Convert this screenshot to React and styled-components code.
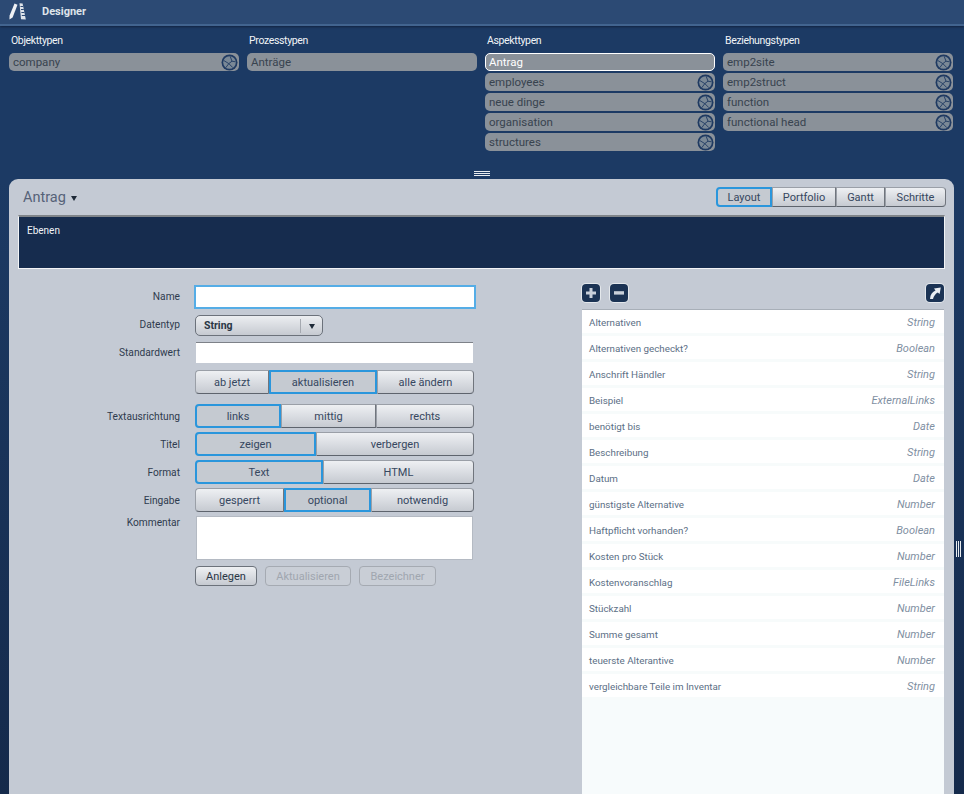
import React from "react";
import styled, { createGlobalStyle } from "styled-components";

const typeColumns = [
    { title: "Objekttypen", items: ["company"] },
    { title: "Prozesstypen", items: ["Anträge"], locked: true },
    {
        title: "Aspekttypen",
        items: ["Antrag", "employees", "neue dinge", "organisation", "structures"],
        selected: "Antrag",
    },
    { title: "Beziehungstypen", items: ["emp2site", "emp2struct", "function", "functional head"] },
];

const tabs = [
    { label: "Layout", width: 56, active: true },
    { label: "Portfolio", width: 64 },
    { label: "Gantt", width: 49 },
    { label: "Schritte", width: 61 },
];

const attributes = [
    ["Alternativen", "String"],
    ["Alternativen gecheckt?", "Boolean"],
    ["Anschrift Händler", "String"],
    ["Beispiel", "ExternalLinks"],
    ["benötigt bis", "Date"],
    ["Beschreibung", "String"],
    ["Datum", "Date"],
    ["günstigste Alternative", "Number"],
    ["Haftpflicht vorhanden?", "Boolean"],
    ["Kosten pro Stück", "Number"],
    ["Kostenvoranschlag", "FileLinks"],
    ["Stückzahl", "Number"],
    ["Summe gesamt", "Number"],
    ["teuerste Alterantive", "Number"],
    ["vergleichbare Teile im Inventar", "String"],
];

const Segments = ({ items, height = 24 }) => (
    <SegmentRow>
        {items.map((item) => (
            <Segment key={item.label} $width={item.width} $height={height} $active={item.active}>
                {item.label}
            </Segment>
        ))}
    </SegmentRow>
);

const WheelIcon = () => (
    <WheelSvg viewBox="0 0 17 17">
        <circle cx="8.5" cy="8.5" r="8" fill="#1f3a62" />
        <circle cx="8.5" cy="8.5" r="6.3" fill="#7a8896" />
        <path d="M2.6 6.4L7.8 9.6L4.8 13.6M7.8 9.6L11 7.2L9.2 2.4M11 7.2L14.4 7.8M7.8 9.6L11.8 13.6" stroke="#1f3a62" strokeWidth="0.9" fill="none" />
    </WheelSvg>
);

const Logo = () => (
    <svg width="17" height="17" viewBox="0 0 17 17">
        <path d="M5.5 0.5L8.5 1.8L3.6 14.6L0.4 16.6L0.6 12.6Z" fill="#eef1f5" />
        <path d="M10.5 0.3L13.6 0.6L16.8 16.4L12 16.2Z" fill="#dfe4ea" />
        <path d="M11.5 3.5H14.2M12 6.5H14.8M12.4 9.5H15.4M12.8 12.5H16" stroke="#2c4a74" strokeWidth="1" />
    </svg>
);

const App = () => (
    <Page>
        <GlobalStyle />
        <TopBar>
            <Logo />
            <AppTitle>Designer</AppTitle>
        </TopBar>
        <TypeGrid>
            {typeColumns.map((column) => (
                <TypeColumn key={column.title}>
                    <ColumnTitle>{column.title}</ColumnTitle>
                    <ChipList>
                        {column.items.map((item) => (
                            <Chip key={item} $selected={item === column.selected}>
                                {item}
                                {!column.locked && item !== column.selected && <WheelIcon />}
                            </Chip>
                        ))}
                    </ChipList>
                </TypeColumn>
            ))}
        </TypeGrid>
        <Splitter>
            <Grip />
        </Splitter>
        <Panel>
            <PanelHead>
                <PanelTitle>
                    Antrag <Caret />
                </PanelTitle>
                <Segments items={tabs} height={20} />
            </PanelHead>
            <LayerBox>Ebenen</LayerBox>
            <Columns>
                <Form>
                    <Label $lift={4}>Name</Label>
                    <FocusInput />
                    <Label $lift={4}>Datentyp</Label>
                    <SelectBox>
                        <SelectValue>String</SelectValue>
                        <SelectArrow>
                            <Caret />
                        </SelectArrow>
                    </SelectBox>
                    <Label $lift={3}>Standardwert</Label>
                    <TextField />
                    <span />
                    <Segments
                        items={[
                            { label: "ab jetzt", width: 74 },
                            { label: "aktualisieren", width: 108, active: true },
                            { label: "alle ändern", width: 97 },
                        ]}
                    />
                    <Label $spaced>Textausrichtung</Label>
                    <Spaced>
                        <Segments
                            items={[
                                { label: "links", width: 86, active: true },
                                { label: "mittig", width: 95 },
                                { label: "rechts", width: 98 },
                            ]}
                        />
                    </Spaced>
                    <Label>Titel</Label>
                    <Segments
                        items={[
                            { label: "zeigen", width: 121, active: true },
                            { label: "verbergen", width: 158 },
                        ]}
                    />
                    <Label>Format</Label>
                    <Segments
                        items={[
                            { label: "Text", width: 128, active: true },
                            { label: "HTML", width: 151 },
                        ]}
                    />
                    <Label>Eingabe</Label>
                    <Segments
                        items={[
                            { label: "gesperrt", width: 89 },
                            { label: "optional", width: 87, active: true },
                            { label: "notwendig", width: 103 },
                        ]}
                    />
                    <Label $top>Kommentar</Label>
                    <CommentField />
                    <span />
                    <ActionRow>
                        <ActionButton $width={62}>Anlegen</ActionButton>
                        <ActionButton $width={86} disabled>
                            Aktualisieren
                        </ActionButton>
                        <ActionButton $width={77} disabled>
                            Bezeichner
                        </ActionButton>
                    </ActionRow>
                </Form>
                <ListColumn>
                    <IconBar>
                        <IconButton>
                            <svg width="12" height="12" viewBox="0 0 12 12">
                                <path d="M4.5 1H7.5V4.5H11V7.5H7.5V11H4.5V7.5H1V4.5H4.5Z" fill="#c9d0da" />
                            </svg>
                        </IconButton>
                        <IconButton>
                            <svg width="12" height="12" viewBox="0 0 12 12">
                                <rect x="1" y="4.2" width="10" height="3.4" fill="#c9d0da" />
                            </svg>
                        </IconButton>
                        <IconSpacer />
                        <IconButton>
                            <svg width="14" height="14" viewBox="0 0 14 14">
                                <path d="M2 13C2.3 8.5 4.5 5.8 7.5 4.6L6 2.6L12.8 1.4L11.6 8L9.8 6.4C7.5 7.6 5.6 10 5 13Z" fill="#e9edf2" />
                            </svg>
                        </IconButton>
                    </IconBar>
                    <AttributeList>
                        {attributes.map(([name, type]) => (
                            <AttributeRow key={name}>
                                <span>{name}</span>
                                <AttributeType>{type}</AttributeType>
                            </AttributeRow>
                        ))}
                    </AttributeList>
                </ListColumn>
            </Columns>
        </Panel>
        <SideGrip />
    </Page>
);

export default App;

const GlobalStyle = createGlobalStyle`
    html, body {
        margin: 0;
        height: 100%;
        overflow: hidden;
    }
    body {
        font-family: Roboto, "Liberation Sans", sans-serif;
    }
`;

const Page = styled.div`
    position: relative;
    display: flex;
    flex-direction: column;
    height: 794px;
    overflow: hidden;
    background: linear-gradient(#1c3a64 0, #1c3a64 180px, #152a4b 794px);
`;

const TopBar = styled.div`
    display: flex;
    align-items: center;
    gap: 16px;
    box-sizing: border-box;
    height: 26px;
    padding: 0 0 2px 9px;
    background: #2c4a74;
    border-bottom: 2px solid #42648f;
    box-shadow: 0 1px 2px #12233f;
`;

const AppTitle = styled.div`
    color: #dfe4ea;
    font-size: 11px;
    font-weight: 700;
`;

const TypeGrid = styled.div`
    display: grid;
    grid-template-columns: repeat(4, 230px);
    gap: 8px;
    height: 144px;
    padding: 0 0 0 9px;
`;

const TypeColumn = styled.div`
    display: flex;
    flex-direction: column;
`;

const ColumnTitle = styled.div`
    height: 27px;
    padding: 8px 0 0 2px;
    box-sizing: border-box;
    color: #f1f4f7;
    font-size: 10.5px;
    letter-spacing: -0.35px;
    line-height: 14px;
`;

const ChipList = styled.div`
    display: flex;
    flex-direction: column;
    gap: 2px;
`;

const Chip = styled.div`
    display: flex;
    align-items: center;
    justify-content: space-between;
    box-sizing: border-box;
    height: 18px;
    padding: 0 1px 0 ${({ $selected }) => ($selected ? "3px" : "4px")};
    border-radius: 5px;
    background: #8a9199;
    color: ${({ $selected }) => ($selected ? "#ffffff" : "#38434f")};
    border: ${({ $selected }) => ($selected ? "1px solid #ffffff" : "none")};
    font-size: 11.5px;
`;

const WheelSvg = styled.svg`
    width: 17px;
    height: 17px;
`;

const Splitter = styled.div`
    display: flex;
    justify-content: center;
    height: 9px;
`;

const Grip = styled.div`
    width: 16px;
    height: 5px;
    margin-top: 1px;
    background: repeating-linear-gradient(#e8ecf0 0, #e8ecf0 1px, transparent 1px, transparent 2px);
`;

const Panel = styled.div`
    flex: 1;
    display: flex;
    flex-direction: column;
    min-height: 0;
    margin: 0 10px 0 9px;
    padding: 0 9px;
    background: #c4cad4;
    border-radius: 9px 9px 0 0;
`;

const PanelHead = styled.div`
    display: flex;
    align-items: center;
    justify-content: space-between;
    height: 36px;
    padding: 0 0 0 5px;
    margin-right: -1px;
`;

const PanelTitle = styled.div`
    display: flex;
    align-items: center;
    gap: 5px;
    color: #566278;
    font-size: 14.5px;
`;

const Caret = styled.span`
    width: 0;
    height: 0;
    margin-top: 2px;
    border-left: 3.5px solid transparent;
    border-right: 3.5px solid transparent;
    border-top: 5px solid #1f2a38;
`;

const LayerBox = styled.div`
    box-sizing: border-box;
    height: 54px;
    padding: 7px 8px;
    background: #162c4e;
    border: 1px solid #f2f4f6;
    border-top: 2px solid #7f8489;
    color: #f1f4f7;
    font-size: 10px;
    line-height: 13px;
`;

const Columns = styled.div`
    display: flex;
    flex: 1;
    min-height: 0;
    justify-content: space-between;
`;

const Form = styled.div`
    display: grid;
    grid-template-columns: 162px 279px;
    column-gap: 15px;
    row-gap: 4px;
    align-content: start;
    padding-top: 17px;
`;

const Label = styled.div`
    align-self: ${({ $top }) => ($top ? "start" : "center")};
    text-align: right;
    color: #2f3b4e;
    font-size: 10.2px;
    line-height: 13px;
    margin-top: ${({ $spaced }) => ($spaced ? "6px" : "0")};
    margin-bottom: ${({ $lift }) => $lift || 0}px;
`;

const Spaced = styled.div`
    margin-top: 6px;
`;

const TextField = styled.div`
    box-sizing: border-box;
    height: 21px;
    margin: 0 1px 3px;
    background: #ffffff;
    border-top: 1px solid #7d8188;
`;

const FocusInput = styled.div`
    box-sizing: border-box;
    height: 24px;
    margin: -1px -2px 2px -1px;
    background: #ffffff;
    border: 2px solid #55ade6;
`;

const CommentField = styled.div`
    box-sizing: border-box;
    height: 44px;
    margin: 0 1px;
    background: #ffffff;
    border: 1px solid #b4bac3;
`;

const SelectBox = styled.div`
    display: flex;
    align-items: center;
    box-sizing: border-box;
    width: 128px;
    height: 21px;
    margin-bottom: 2px;
    border: 1px solid #6c727b;
    border-radius: 5px;
    background: linear-gradient(#eceef1, #c6cad1);
`;

const SelectValue = styled.div`
    flex: 1;
    padding-left: 8px;
    color: #2a3646;
    font-size: 10.5px;
    font-weight: 700;
`;

const SelectArrow = styled.div`
    display: flex;
    align-items: center;
    justify-content: center;
    width: 21px;
    height: 14px;
    border-left: 1px solid #a5a9b0;
`;

const SegmentRow = styled.div`
    display: flex;
`;

const Segment = styled.div`
    display: flex;
    align-items: center;
    justify-content: center;
    box-sizing: border-box;
    width: ${({ $width }) => $width}px;
    height: ${({ $height }) => $height}px;
    border: ${({ $active }) => ($active ? "2px solid #2a96dc" : "1px solid #9a9fa7")};
    border-bottom-color: ${({ $active }) => ($active ? "#2a96dc" : "#5e646d")};
    border-right-color: ${({ $active }) => ($active ? "#2a96dc" : "#70757d")};
    background: ${({ $active }) => ($active ? "#c5cad1" : "linear-gradient(#eef0f3, #c6cad1)")};
    color: #364760;
    font-size: 11px;
    &:first-child {
        border-radius: 4px 0 0 4px;
    }
    &:last-child {
        border-radius: 0 4px 4px 0;
    }
`;

const ActionRow = styled.div`
    display: flex;
    gap: 8px;
    margin-top: 2px;
`;

const ActionButton = styled.div`
    display: flex;
    align-items: center;
    justify-content: center;
    box-sizing: border-box;
    width: ${({ $width }) => $width}px;
    height: 20px;
    border: 1px solid ${({ disabled }) => (disabled ? "#a5aab2" : "#6c727b")};
    border-radius: 4px;
    background: ${({ disabled }) => (disabled ? "#c9ced6" : "linear-gradient(#eef0f3, #c6cad1)")};
    color: ${({ disabled }) => (disabled ? "#a0a6af" : "#2a3646")};
    font-size: 11px;
`;

const ListColumn = styled.div`
    display: flex;
    flex-direction: column;
    width: 362px;
    min-height: 0;
    margin-right: 1px;
`;

const IconBar = styled.div`
    display: flex;
    align-items: flex-start;
    gap: 10px;
    height: 40px;
    padding-top: 15px;
    box-sizing: border-box;
`;

const IconSpacer = styled.div`
    flex: 1;
`;

const IconButton = styled.div`
    display: flex;
    align-items: center;
    justify-content: center;
    box-sizing: border-box;
    width: 18px;
    height: 18px;
    border-radius: 4px;
    background: #1b3354;
    box-shadow: 0 0 0 1px #e4e8ec;
`;

const AttributeList = styled.div`
    flex: 1;
    background: #f7fbfc;
    border-top: 1px solid #a8afb8;
`;

const AttributeRow = styled.div`
    display: flex;
    align-items: center;
    justify-content: space-between;
    box-sizing: border-box;
    height: 26px;
    padding: 1px 9px 0 7px;
    background: #ffffff;
    border-bottom: 3px solid #f7fbfb;
    color: #5c6f86;
    font-size: 9.8px;
`;

const AttributeType = styled.span`
    color: #7f8fa2;
    font-size: 11px;
    font-style: italic;
`;

const SideGrip = styled.div`
    position: absolute;
    left: 956px;
    top: 541px;
    width: 5px;
    height: 16px;
    background: repeating-linear-gradient(90deg, #e8ecf0 0, #e8ecf0 1px, transparent 1px, transparent 2px);
`;
